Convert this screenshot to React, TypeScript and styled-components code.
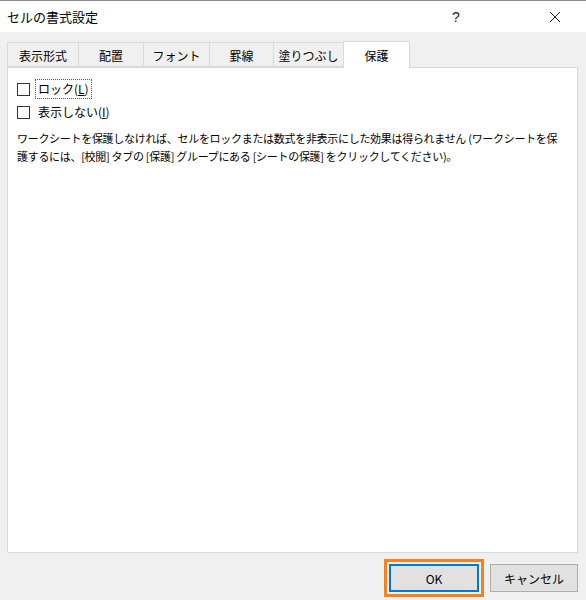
import { createGlobalStyle, styled } from 'styled-components';

const GlobalStyle = createGlobalStyle`
  html, body {
    margin: 0;
    padding: 0;
    background: #f0f0f0;
  }
  body {
    font-family: 'Noto Sans CJK JP', 'Noto Sans', sans-serif;
    color: #000;
  }
`;

/* ダイアログ全体 */
const Dialog = styled.div`
  width: 586px;
  height: 600px;
  display: flex;
  flex-direction: column;
  border-top: 1px solid #8a8a8a;
  box-sizing: border-box;
`;

const TitleBar = styled.div`
  height: 31px;
  background: #fff;
  display: flex;
  align-items: center;
  padding-left: 7px;
  flex-shrink: 0;
`;

const Title = styled.div`
  flex: 1;
  font-size: 13px;
`;

const TitleButton = styled.div<{ $width: number; $gap?: number }>`
  width: ${(p) => p.$width}px;
  margin-right: ${(p) => p.$gap ?? 0}px;
  height: 31px;
  display: flex;
  align-items: center;
  justify-content: center;
  font-family: 'Liberation Sans', sans-serif;
  font-size: 14px;
  color: #222;
`;

const Body = styled.div`
  flex: 1;
  display: flex;
  flex-direction: column;
  padding: 9px 8px 8px 7px;
  background: #f0f0f0;
`;

const TabRow = styled.div`
  display: flex;
  align-items: flex-end;
  height: 26px;
  position: relative;
  z-index: 1;
`;

const Tab = styled.div<{ $width: number; $active?: boolean }>`
  width: ${(p) => p.$width}px;
  height: ${(p) => (p.$active ? 27 : 25)}px;
  box-sizing: border-box;
  display: flex;
  align-items: center;
  justify-content: center;
  font-size: 12px;
  background: ${(p) => (p.$active ? '#fff' : '#f0f0f0')};
  border: 1px solid #d9d9d9;
  border-bottom: ${(p) => (p.$active ? 'none' : '1px solid #d9d9d9')};
  margin-left: -1px;
  margin-bottom: ${(p) => (p.$active ? -1 : 0)}px;
  padding-top: ${(p) => (p.$active ? 0 : 1)}px;

  &:first-child {
    margin-left: 0;
  }
`;

const Panel = styled.div`
  height: 486px;
  box-sizing: border-box;
  background: #fff;
  border: 1px solid #d9d9d9;
  padding: 10px 9px 0 9px;
`;

const CheckRow = styled.label`
  display: flex;
  align-items: center;
  height: 22px;
  font-size: 12px;
  margin-bottom: 1px;
`;

const Box = styled.span`
  width: 13px;
  height: 13px;
  box-sizing: border-box;
  border: 1px solid #333;
  background: #fff;
  margin-right: 5px;
`;

const Label = styled.span<{ $focused?: boolean }>`
  padding: 1px 2px;
  border: 1px dotted ${(p) => (p.$focused ? '#555' : 'transparent')};
  line-height: 16px;
`;

const Note = styled.p`
  margin: 6px 0 0 0;
  font-size: 11px;
  line-height: 18px;
  letter-spacing: -0.3px;
  white-space: nowrap;
`;

const Footer = styled.div`
  display: flex;
  justify-content: flex-end;
  gap: 11px;
  padding-top: 11px;
`;

const Button = styled.div<{ $default?: boolean }>`
  width: ${(p) => (p.$default ? 90 : 88)}px;
  height: 28px;
  box-sizing: border-box;
  display: flex;
  align-items: center;
  justify-content: center;
  font-size: 12px;
  background: #e1e1e1;
  border: ${(p) => (p.$default ? '2px solid #0078d7' : '1px solid #adadad')};
  outline: ${(p) => (p.$default ? '3px solid #f7801f' : 'none')};
  outline-offset: 2px;
`;

const CloseIcon = () => (
  <svg width='12' height='12' viewBox='0 0 12 12'>
    <path d='M1 1 L11 11 M11 1 L1 11' stroke='#222' strokeWidth='1' />
  </svg>
);

const tabs = [
  { label: '表示形式', width: 72 },
  { label: '配置', width: 66 },
  { label: 'フォント', width: 67 },
  { label: '罫線', width: 65 },
  { label: '塗りつぶし', width: 71 },
  { label: '保護', width: 67, active: true },
];

export default function App() {
  return (
    <>
      <GlobalStyle />
      <Dialog>
        <TitleBar>
          <Title>セルの書式設定</Title>
          <TitleButton $width={46} $gap={45}>?</TitleButton>
          <TitleButton $width={62}>
            <CloseIcon />
          </TitleButton>
        </TitleBar>
        <Body>
          <TabRow>
            {tabs.map((t) => (
              <Tab key={t.label} $width={t.width} $active={t.active}>
                {t.label}
              </Tab>
            ))}
          </TabRow>
          <Panel>
            <CheckRow>
              <Box />
              <Label $focused>ロック(<u>L</u>)</Label>
            </CheckRow>
            <CheckRow>
              <Box />
              <Label>表示しない(<u>I</u>)</Label>
            </CheckRow>
            <Note>
              ワークシートを保護しなければ、セルをロックまたは数式を非表示にした効果は得られません (ワークシートを保
              <br />
              護するには、[校閲] タブの [保護] グループにある [シートの保護] をクリックしてください)。
            </Note>
          </Panel>
          <Footer>
            <Button $default>OK</Button>
            <Button>キャンセル</Button>
          </Footer>
        </Body>
      </Dialog>
    </>
  );
}
